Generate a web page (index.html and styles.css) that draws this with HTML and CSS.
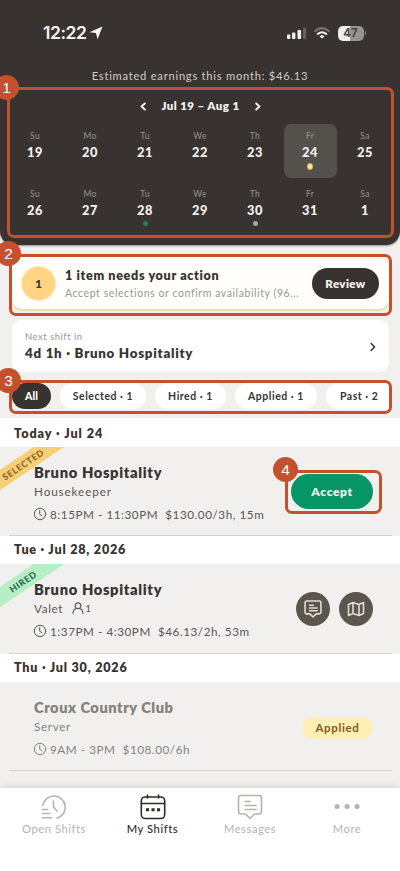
FILE: index.html
```html
<!DOCTYPE html>
<html lang="en">
<head>
<meta charset="utf-8">
<meta name="viewport" content="width=device-width, initial-scale=1">
<title>My Shifts</title>
<link rel="stylesheet" href="styles.css">
</head>
<body>
<svg width="0" height="0" class="defs" aria-hidden="true">
  <symbol id="clock" viewBox="0 0 14 14"><circle cx="7" cy="7" r="5.7"/><path d="M6.7 3.7v3.5l2.2 1.5"/></symbol>
  <symbol id="message" viewBox="0 0 26 26"><path d="M4 1.5h18q2.5 0 2.5 2.500v13.500q0 2.500-2.500 2.500h-4.500L13 24.500 8.500 20H4q-2.500 0-2.500-2.500V4q0-2.500 2.500-2.500z"/><path d="M8 7.500h5.500M8 11.500h11M8 15.500h11"/></symbol>
</svg>
<div class="screen">
  <header class="top">
    <div class="status">
      <span class="time">12:22</span>
      <svg class="arrow" width="14" height="14" viewBox="0 0 14 14"><path d="M13.500 .5 8.500 13.300 7 7 .5 6.200z"/></svg>
      <svg class="signal" width="20" height="12" viewBox="0 0 20 12"><rect x="0" y="7.500" width="3.400" height="4.500" rx="1"/><rect x="5" y="5.500" width="3.400" height="6.500" rx="1"/><rect x="10.500" y="3" width="3.600" height="9" rx="1"/><rect class="dim" x="16" y="0.500" width="3.200" height="11.500" rx="1"/></svg>
      <svg class="wifi" width="16" height="12" viewBox="0 0 16 12"><path class="dim" d="M1 4.200q7-6.200 14 0"/><path d="M3.700 7q4.300-3.600 8.600 0"/><path class="core" d="M8 11.500 5.500 9.200q2.500-1.700 5 0z"/></svg>
      <span class="battery">47</span><i class="nub"></i>
    </div>
    <p class="earnings">Estimated earnings this month: $46.13</p>
    <div class="range">
      <svg width="6" height="9" viewBox="0 0 6 9"><path d="M4.800 1.500 1.500 4.500 4.800 7.500"/></svg>
      <span>Jul 19 – Aug 1</span>
      <svg width="6" height="9" viewBox="0 0 6 9"><path d="M1.200 1.500 4.500 4.500 1.200 7.500"/></svg>
    </div>
    <div class="calendar">
      <div class="day"><small>Su</small><b>19</b></div>
      <div class="day"><small>Mo</small><b>20</b></div>
      <div class="day"><small>Tu</small><b>21</b></div>
      <div class="day"><small>We</small><b>22</b></div>
      <div class="day"><small>Th</small><b>23</b></div>
      <div class="day current"><small>Fr</small><b>24</b><i></i></div>
      <div class="day"><small>Sa</small><b>25</b></div>
      <div class="day"><small>Su</small><b>26</b></div>
      <div class="day"><small>Mo</small><b>27</b></div>
      <div class="day"><small>Tu</small><b>28</b><i class="green"></i></div>
      <div class="day"><small>We</small><b>29</b></div>
      <div class="day"><small>Th</small><b>30</b><i class="gray"></i></div>
      <div class="day"><small>Fr</small><b>31</b></div>
      <div class="day"><small>Sa</small><b>1</b></div>
    </div>
  </header>

  <section class="action">
    <span class="count">1</span>
    <div class="action-text"><h2>1 item needs your action</h2><p>Accept selections or confirm availability (96...</p></div>
    <button class="review">Review</button>
  </section>
  <section class="next">
    <div><p>Next shift in</p><h2>4d 1h · Bruno Hospitality</h2></div>
    <svg width="6" height="10" viewBox="0 0 6 10"><path d="M1.200 1.500 4.500 5 1.200 8.500"/></svg>
  </section>
  <nav class="chips">
    <span class="chip all">All</span><span class="chip sel">Selected · 1</span><span class="chip hir">Hired · 1</span><span class="chip app">Applied · 1</span><span class="chip past">Past · 2</span>
  </nav>

  <h3 class="date today">Today · Jul 24</h3>
  <article class="shift first">
    <span class="ribbon selected">SELECTED</span>
    <h4>Bruno Hospitality</h4>
    <p class="role housekeeper">Housekeeper</p>
    <p class="when"><svg width="14" height="14"><use href="#clock"/></svg><span>8:15PM - 11:30PM&nbsp; $130.00/3h, 15m</span></p>
    <button class="accept">Accept</button>
  </article>
  <h3 class="date">Tue · Jul 28, 2026</h3>
  <article class="shift second">
    <span class="ribbon hired">HIRED</span>
    <h4>Bruno Hospitality</h4>
    <p class="role">Valet <svg class="person" width="12" height="12" viewBox="0 0 12 12"><circle cx="6" cy="3.800" r="2.900"/><path d="M1 11.300q.5-4.300 3.500-4.800M11 11.300q-.5-4.300-3.500-4.800"/></svg><span class="one">1</span></p>
    <p class="when"><svg width="14" height="14"><use href="#clock"/></svg><span>1:37PM - 4:30PM&nbsp; $46.13/2h, 53m</span></p>
    <div class="tools">
      <span><svg width="18" height="18"><use href="#message"/></svg></span>
      <span><svg width="18" height="16" viewBox="0 0 18 16"><path d="M1.500 3.500 6 1.500l6 2 4.500-2v11l-4.500 2-6-2-4.500 2zM6 1.500v11M12 3.500v11"/></svg></span>
    </div>
  </article>
  <h3 class="date">Thu · Jul 30, 2026</h3>
  <article class="shift third">
    <h4>Croux Country Club</h4>
    <p class="role server">Server</p>
    <p class="when"><svg width="14" height="14"><use href="#clock"/></svg><span>9AM - 3PM&nbsp; $108.00/6h</span></p>
    <span class="applied">Applied</span>
  </article>

  <nav class="tabs">
    <div class="tab"><svg width="26" height="26" viewBox="0 0 26 26"><path d="M1.800 11.500A11.300 11.300 0 1 1 16 24.200M12.500 7v6l3.500 4M1.500 15.500h5M1.500 19.500h7M1.500 23.800h9"/></svg><span>Open Shifts</span></div>
    <div class="tab active"><svg width="26" height="26" viewBox="0 0 26 26"><rect x="1.300" y="3" width="23.400" height="21.500" rx="4"/><path d="M1.500 9.500h23M7.500 1v3M18.500 1v3"/><path class="dots" d="M7.500 15.800h.1M13 15.800h.1M18.500 15.800h.1"/></svg><span>My Shifts</span></div>
    <div class="tab"><svg width="26" height="26"><use href="#message"/></svg><span>Messages</span></div>
    <div class="tab"><svg width="26" height="26" viewBox="0 0 26 26"><path class="more" d="M3 12.500h.1M13 12.500h.1M23 12.500h.1"/></svg><span>More</span></div>
  </nav>

  <div class="callout c1"><span>1</span></div>
  <div class="callout c2"><span>2</span></div>
  <div class="callout c3"><span>3</span></div>
  <div class="callout c4"><span>4</span></div>
</div>
</body>
</html>
```

FILE: styles.css
```css
* { box-sizing: border-box; }
body, h2, h3, h4, p { margin: 0; }
body { background: #fff; font-family: Lato, "Liberation Sans", sans-serif; color: #393431; }
svg { fill: none; stroke: currentColor; stroke-linecap: round; stroke-linejoin: round; flex: none; }
.defs { position: absolute; }
button { border: 0; padding: 0; font-family: inherit; }
.screen { position: relative; width: 400px; height: 871px; overflow: hidden; display: flex; flex-direction: column; background: #f2f0ef; white-space: nowrap; }
.screen > * { flex: none; }

.top { height: 245px; background: #383330; border-radius: 0 0 14px 14px; box-shadow: 0 1px 2px #0006; color: #f4f2ef; }
.status { height: 66px; padding: 0 34px 0 43px; display: flex; align-items: center; }
.time { font: 600 17.500px/20px Inter, sans-serif; letter-spacing: -.45px; }
.arrow { margin-left: 3px; fill: #fff; stroke: none; }
.signal { margin-left: auto; fill: #f4f2ef; stroke: none; }
.signal .dim { fill: #67625f; }
.wifi { margin: 0 7.500px 0 7px; stroke-width: 2; }
.wifi .dim { stroke: #77726f; }
.wifi .core { fill: #fff; stroke: none; }
.battery { width: 26px; height: 15px; border-radius: 5px; background: linear-gradient(90deg, #f0eeec 47%, #979390 47%); color: #4b4643; font: 700 11.500px/15px Inter, sans-serif; text-align: center; }
.nub { width: 1.500px; height: 4px; margin-left: 1px; border-radius: 1px; background: #8b8784; }
.earnings { height: 20px; font-size: 11.200px; line-height: 20px; text-align: center; letter-spacing: .74px; color: #cfccc8; }
.range { height: 38px; display: flex; justify-content: center; align-items: center; gap: 16px; font-size: 11.500px; font-weight: 800; letter-spacing: .42px; }
.range svg { stroke-width: 1.900; margin-top: 3px; }
.range svg:last-child { margin-right: -1px; }
.calendar { display: grid; grid-template-columns: repeat(7, 55px); justify-content: center; row-gap: 4px; }
.day { height: 54px; margin: 0 1px; padding-top: 6px; border-radius: 7px; display: flex; flex-direction: column; align-items: center; }
.day small { font-size: 8.500px; line-height: 13px; letter-spacing: .3px; color: #98938f; }
.day b { font-size: 12.800px; line-height: 19px; font-weight: 900; letter-spacing: .5px; }
.day i { width: 5px; height: 5px; margin-top: 1px; border-radius: 3px; background: #ffe6aa; }
.day .green { background: #23815f; }
.day .gray { background: #aaa6a3; }
.current { background: #54514d; }
.current i { width: 6px; height: 7px; border: 1px solid #d8ae63; }

.action { width: 377px; height: 52px; margin: 12px 0 0 12px; padding: 0 9px 0 10px; display: flex; align-items: center; border-radius: 10px; background: #fffefb; box-shadow: 0 2px 1px #efdba9; }
.count { width: 33px; height: 33px; border-radius: 50%; background: #ffd483; box-shadow: 0 0 1px 1px #ffe9bc; font-size: 12px; line-height: 33px; font-weight: 900; text-align: center; }
.action-text { flex: 1; margin-left: 10px; padding-top: 2px; }
.action h2 { font-size: 12.600px; line-height: 18px; font-weight: 800; letter-spacing: .65px; }
.action p { font-size: 10.500px; line-height: 16px; letter-spacing: .58px; color: #9a9794; }
.review { width: 67px; height: 31px; margin-right: 1px; border-radius: 16px; background: #383330; color: #f4f1ed; font-size: 11.500px; font-weight: 800; letter-spacing: .4px; }
.next { width: 377px; height: 52px; margin: 10.500px 0 0 12px; padding: 0 13px; display: flex; justify-content: space-between; align-items: center; border-radius: 9px; background: #fff; }
.next div { padding-top: 2px; }
.next p { font-size: 9.500px; line-height: 14px; letter-spacing: .5px; color: #9a9794; }
.next h2 { font-size: 13.300px; line-height: 19px; font-weight: 800; letter-spacing: .74px; }
.next svg { stroke-width: 1.600; margin-top: 3px; }
.chips { width: 377px; height: 28px; margin: 10.500px 0 0 12px; padding-top: 1px; display: flex; overflow: hidden; }
.chip { flex: none; height: 26px; margin-right: 9px; border-radius: 13px; background: #fff; font-size: 10.500px; line-height: 26px; font-weight: 700; letter-spacing: .52px; text-align: center; }
.all { width: 39px; background: #383330; color: #fff; font-weight: 900; letter-spacing: .1px; }
.sel { width: 86px; }
.hir { width: 71px; }
.app { width: 82px; }
.past { width: 80px; padding-left: 14px; text-align: left; border-radius: 13px 0 0 13px; }

.date { height: 28px; padding-left: 14px; background: #fff; font-size: 12.600px; line-height: 28px; font-weight: 800; letter-spacing: .78px; }
.today { height: 29.500px; margin-top: 7.500px; line-height: 31px; letter-spacing: .95px; }
.shift { position: relative; height: 90px; padding: 15px 0 0 34px; overflow: hidden; }
.shift::after { content: ""; position: absolute; left: 9px; right: 8px; bottom: 0; height: 1px; background: #d4d1ce; }
.first { height: 89px; }
.shift h4 { font-size: 14.700px; line-height: 20px; font-weight: 800; letter-spacing: .65px; }
.role { height: 18px; display: flex; align-items: center; font-size: 11.700px; line-height: 18px; letter-spacing: .65px; color: #595552; }
.housekeeper { letter-spacing: .9px; }
.when { height: 16px; margin-top: 6px; display: flex; align-items: center; font-size: 11.700px; color: #595552; letter-spacing: .55px; }
.when svg { margin: 0 3px 0 -1px; }
.person { margin: 0 1px 0 9px; stroke-width: 1.200; }
.one { font-size: 10px; }
.accept { position: absolute; left: 291px; top: 27px; width: 82px; height: 35px; border-radius: 18px; background: #079568; color: #e9f8ee; font-size: 12px; font-weight: 800; letter-spacing: .6px; }
.ribbon { position: absolute; left: -37px; top: 9px; width: 120px; height: 17px; transform: rotate(-34deg); font-size: 9px; line-height: 17px; font-weight: 900; text-align: center; letter-spacing: .6px; }
.selected { background: #f8ce78; color: #8b6425; }
.hired { background: #b6eec5; color: #2d6a4c; }
.tools { position: absolute; left: 296px; top: 28px; display: flex; gap: 9px; color: #e0ddd5; }
.tools span { width: 34px; height: 34px; border-radius: 50%; display: grid; place-items: center; background: #5a554d; }
.tools svg { stroke-width: 1.600; }
.tools span:first-child svg { stroke-width: 2.300; }
.third { height: 106px; }
.third::after { bottom: 17px; }
.third h4, .third p { color: #85817b; }
.third h4 { letter-spacing: .5px; }
.applied { position: absolute; left: 303px; top: 36px; width: 69px; height: 20px; border-radius: 8px; background: #ffefb4; box-shadow: 0 0 3px #ffefb4; color: #815b20; font-size: 11.500px; line-height: 20px; font-weight: 700; letter-spacing: .65px; text-align: center; }

.tabs { position: relative; height: 83px; padding: 6px 4px 0; display: grid; grid-template-columns: 100px 97px 98px 96px; align-items: start; background: #fff; box-shadow: 0 -1px 7px #0002; }
.tab { display: flex; flex-direction: column; align-items: center; color: #b5b3b1; font-size: 11.200px; line-height: 18px; letter-spacing: .55px; }
.tab svg { stroke-width: 1.600; }
.active { color: #302c2a; font-weight: 500; }
.dots { stroke-width: 3; stroke-linecap: square; }
.more { stroke-width: 5; }

.callout { position: absolute; border: 3px solid #c5502d; border-radius: 7px; }
.callout span { position: absolute; width: 25px; height: 25px; border-radius: 50%; background: #c5502d; color: #fff; font: 15.500px/25px "Liberation Sans", sans-serif; text-align: center; }
.c1 { left: 7px; top: 87px; width: 387px; height: 151px; }
.c1 span { left: -16px; top: -15px; }
.c2 { left: 9px; top: 254px; width: 383px; height: 62px; }
.c2 span { left: -16px; top: -16px; }
.c3 { left: 9px; top: 380px; width: 383px; height: 34px; }
.c3 span { left: -16px; top: -15px; }
.c4 { left: 285px; top: 470px; width: 97px; height: 44px; }
.c4 span { left: -15px; top: -16px; }
```
